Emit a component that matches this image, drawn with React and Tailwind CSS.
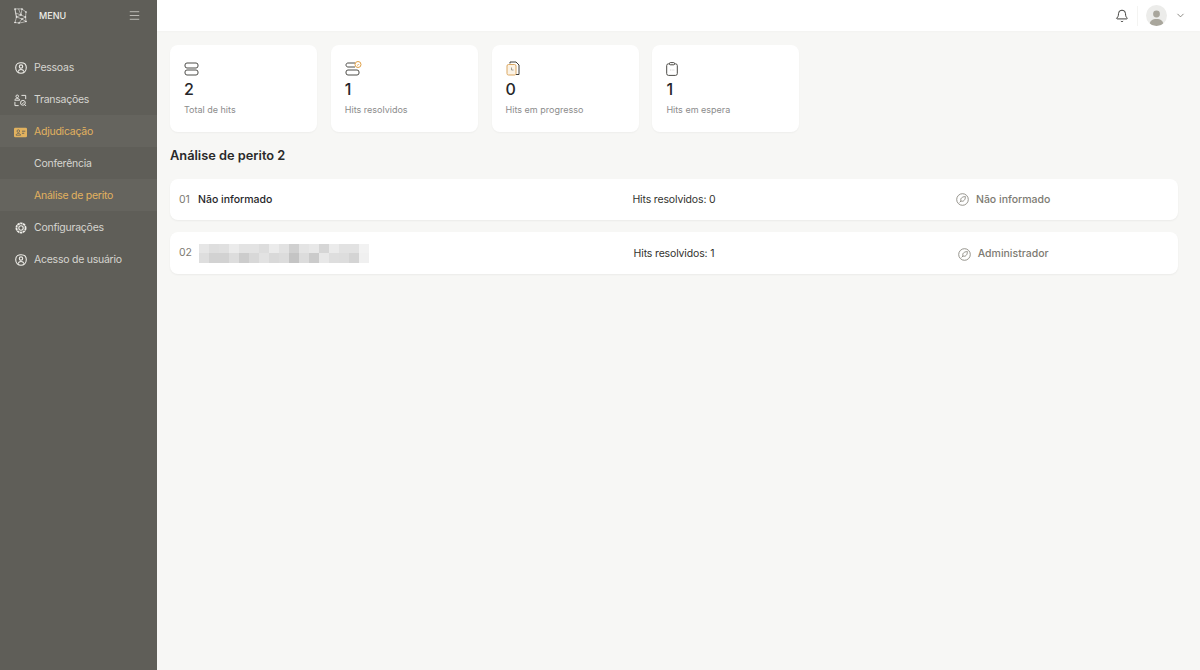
import React from "react";
import { Bell, ChevronDown, Menu } from "lucide-react";

const FONT = "font-['Inter','Noto_Sans',sans-serif]";

// pixelated name in row 02
const PIXELS = [
  ["#e6e6e6", "#dedede", "#e0e0e0", "#ebebeb", "#e3e3e3", "#e3e3e3", "#dddddd", "#ebebeb", "#e2e2e2", "#d0d0d0", "#e4e4e4", "#e8e8e8", "#d6d6d6", "#ebebeb", "#e2e2e2", "#e2e2e2", "#f2f2f2"],
  ["#dedede", "#d2d2d2", "#d2d2d2", "#dddddd", "#cccccc", "#d8d8d8", "#e2e2e2", "#d9d9d9", "#dcdcdc", "#c4c4c4", "#dcdcdc", "#cbcbcb", "#e8e8e8", "#dedede", "#dddddd", "#d4d4d4", "#f0f0f0"],
];

const LogoIcon = () => (
  <svg width="13" height="16" viewBox="0 0 13 16" fill="none" stroke="#e9e8e4" strokeWidth="0.6">
    <path d="M1 1 L4.5 .8 L8 1 L12 4 L11.5 9 L12 13.5 L8 14.5 L5 15 L1 14.5 L2.5 9 L1.5 5 Z" />
    <path d="M1.5 5 L7 7 L2.5 9 L8 11 L12 13.5 M8 1 L7 7 L11.5 9 L8 11 L5 15 M1 1 L2.5 9 M4.5 .8 L7 7" />
    <g fill="#f4f3f0" stroke="none">
      <circle cx="1" cy="1" r="0.8" />
      <circle cx="8" cy="1" r="0.8" />
      <circle cx="12" cy="4" r="0.8" />
      <circle cx="7" cy="7" r="0.8" />
      <circle cx="11.5" cy="9" r="0.8" />
      <circle cx="12" cy="13.5" r="0.8" />
      <circle cx="5" cy="15" r="0.8" />
      <circle cx="1" cy="14.5" r="0.8" />
      <circle cx="2.5" cy="9" r="0.8" />
      <circle cx="8" cy="11" r="0.8" />
    </g>
  </svg>
);

const PersonBadgeIcon = () => (
  <svg width="12" height="12" viewBox="0 0 12 12" fill="none" stroke="#efeee9" strokeWidth="1.1">
    <path d="M6 .7 C8.2 .7 11.3 1.8 11.3 5.6 C11.3 9.2 8.8 11.3 6 11.3 C3.2 11.3 .7 9.2 .7 5.6 C.7 1.8 3.8 .7 6 .7 Z" />
    <circle cx="6" cy="4.6" r="1.7" />
    <path d="M3 9.6 C3.6 8 4.7 7.5 6 7.5 C7.3 7.5 8.4 8 9 9.6" />
  </svg>
);

const TransactionIcon = () => (
  <svg width="14" height="13" viewBox="0 0 14 13" fill="none" stroke="#efeee9" strokeWidth="1">
    <circle cx="3.5" cy="2" r="1.4" />
    <path d="M.8 6.2 C1 4.8 2.2 4.4 3.5 4.4 C4.8 4.4 6 4.8 6.2 6.2 Z" />
    <path d="M8 1 H12.6 V5" />
    <path d="M1 8 V12 H5" />
    <circle cx="9.6" cy="9" r="2.6" />
    <path d="M8.6 9 L9.4 9.8 L10.8 8.4 M11.6 11 L13 12.4" />
  </svg>
);

const IdCardIcon = () => (
  <svg width="15" height="11" viewBox="0 0 15 11">
    <rect width="15" height="11" rx="1.5" fill="#e2b25f" />
    <circle cx="5" cy="3.9" r="1.5" fill="none" stroke="#5f5e58" strokeWidth="0.9" />
    <path d="M2.4 8.6 C2.7 7 3.8 6.6 5 6.6 C6.2 6.6 7.3 7 7.6 8.6 Z" fill="none" stroke="#5f5e58" strokeWidth="0.9" />
    <path d="M9.2 4 H13 M9.2 6.4 H11.8" stroke="#5f5e58" strokeWidth="1" />
  </svg>
);

const GearIcon = () => (
  <svg width="12" height="12" viewBox="0 0 12 12" fill="none" stroke="#efeee9" strokeWidth="1.1">
    <circle cx="6" cy="6" r="4.6" strokeDasharray="2.4 .5" strokeWidth="1.8" />
    <circle cx="6" cy="6" r="2.2" />
  </svg>
);

const StackIcon = () => (
  <svg width="15" height="14" viewBox="0 0 15 14" fill="none" stroke="#4d4c48" strokeWidth="1">
    <rect x="1" y="1" width="13" height="5" rx="2" />
    <rect x="1" y="8" width="13" height="5" rx="2" />
  </svg>
);

const StackCheckIcon = () => (
  <svg width="17" height="15" viewBox="0 0 17 15" fill="none" strokeWidth="1">
    <path d="M10 2 H3 C1.8 2 1 2.8 1 4 C1 5.2 1.8 6 3 6 H10" stroke="#4d4c48" />
    <rect x="1" y="9" width="13" height="5" rx="2" stroke="#4d4c48" />
    <circle cx="13" cy="3.5" r="3" stroke="#df9f45" />
    <path d="M11.9 3.5 L12.8 4.4 L14.2 3" stroke="#df9f45" strokeWidth="0.8" />
  </svg>
);

const ProgressIcon = () => (
  <svg width="14" height="15" viewBox="0 0 14 15" fill="none" strokeWidth="1">
    <path d="M4 2.5 V1 H10 L13 4 V13.5 H10" stroke="#3a3a37" />
    <rect x="1" y="3.5" width="9" height="10.5" rx="1.5" stroke="#dca862" fill="#fbf3e6" />
    <path d="M5.5 6.5 V9 H7.5" stroke="#8b8880" strokeWidth="0.8" />
  </svg>
);

const ClipboardIcon = () => (
  <svg width="12" height="14" viewBox="0 0 12 14" fill="none" stroke="#4d4c48" strokeWidth="1">
    <rect x=".7" y="1.8" width="10.6" height="11.6" rx="1.8" />
    <rect x="3.5" y=".6" width="5" height="2.2" rx=".8" fill="#fff" />
    <path d="M4 8 H4.6 M5.8 8 H6.4 M7.6 8 H8.2" stroke="#9a9891" strokeWidth="0.7" />
  </svg>
);

const CompassIcon = () => (
  <svg width="13" height="13" viewBox="0 0 13 13" fill="none" stroke="#8a8880" strokeWidth="0.9">
    <circle cx="6.5" cy="6.5" r="5.8" />
    <path d="M3.6 9.4 L5 8 M5 8 C4 5.6 6 3.6 9.4 3.6 C9.4 7 7.4 9 5 8 Z" />
  </svg>
);

const NavItem = ({ icon, label, active, parentActive }) => (
  <div className={`flex h-8 items-center gap-[7px] pl-[14px] pt-[2px] text-[10.5px] leading-4 tracking-[-0.25px] ${parentActive ? "bg-[#65645e]" : ""} ${active ? "text-[#e2b25f]" : "text-[#d6d5d0]"}`}>
    <span className="flex w-[13px] justify-center">{icon}</span>
    {label}
  </div>
);

const SubItem = ({ label, active }) => (
  <div className={`flex h-8 items-center pl-[34px] pt-[2px] text-[10.5px] leading-4 tracking-[-0.25px] ${active ? "bg-[#65645e] text-[#e2b25f]" : "text-[#d6d5d0]"}`}>
    {label}
  </div>
);

const StatCard = ({ icon, value, label }) => (
  <div className="flex h-[87px] w-[147px] flex-col rounded-lg bg-white pl-[14px] pt-4 shadow-[0_1px_2px_rgba(0,0,0,0.04)]">
    <div className="flex h-[15px] items-center">{icon}</div>
    <div className="mt-[3px] text-[16px] leading-5 font-medium text-[#26262a]">{value}</div>
    <div className="mt-[5px] text-[9px] leading-3 text-[#8c8c8c]">{label}</div>
  </div>
);

const HitRow = ({ index, name, resolved, owner }) => (
  <div className="grid grid-cols-3 items-center rounded-lg bg-white px-2 py-[11.5px] text-[10.5px] leading-4 shadow-[0_1px_2px_rgba(0,0,0,0.05)]">
    <div className="flex min-h-[18px] items-center gap-[8px]">
      <span className="w-[12px] pl-px text-[#7d7b72]">{index}</span>
      {name ? (
        <span className="font-medium text-[#26262a]">{name}</span>
      ) : (
        <div className="ml-px flex flex-col">
          {PIXELS.map((row, r) => (
            <div key={r} className="flex">
              {row.map((c, i) => (
                <div key={i} className="h-[9.5px] w-[10px]" style={{ backgroundColor: c }} />
              ))}
            </div>
          ))}
        </div>
      )}
    </div>
    <div className={`text-center tracking-[-0.15px] text-[#33332f] ${name ? "" : "pt-[2px]"}`}>Hits resolvidos: {resolved}</div>
    <div className={`flex items-center justify-center gap-[7px] pr-[3px] font-medium text-[#7d7b72] ${name ? "" : "pt-[2px]"}`}>
      <CompassIcon />
      {owner}
    </div>
  </div>
);

export default function App() {
  return (
    <div className={`flex h-[670px] w-[1200px] overflow-hidden bg-[#f7f7f5] ${FONT}`}>
      {/* Sidebar */}
      <aside className="w-[157px] shrink-0 bg-[#5f5e58]">
        <div className="flex h-[31px] items-center pl-[14px] pr-[16px]">
          <LogoIcon />
          <span className="ml-[12px] text-[9px] font-medium text-[#efeee9]">MENU</span>
          <Menu size={13} strokeWidth={1.5} className="ml-auto text-[#cfcec9]" />
        </div>
        <nav className="mt-[20px]">
          <NavItem icon={<PersonBadgeIcon />} label="Pessoas" />
          <NavItem icon={<TransactionIcon />} label="Transações" />
          <NavItem icon={<IdCardIcon />} label="Adjudicação" active parentActive />
          <SubItem label="Conferência" />
          <SubItem label="Análise de perito" active />
          <NavItem icon={<GearIcon />} label="Configurações" />
          <NavItem icon={<PersonBadgeIcon />} label="Acesso de usuário" />
        </nav>
      </aside>

      <div className="flex min-w-0 flex-1 flex-col">
        {/* Topbar */}
        <header className="flex h-[31px] items-center justify-end bg-white pr-[14px] shadow-[0_1px_2px_rgba(0,0,0,0.02)]">
          <Bell size={14} strokeWidth={1.6} className="text-[#33332f]" />
          <div className="ml-[8px] h-5 w-px bg-[#f4f4f2]" />
          <div className="ml-[8px] flex h-[21px] w-[21px] items-end justify-center overflow-hidden rounded-full bg-[#ececea]">
            <svg width="15" height="17" viewBox="0 0 15 17" fill="#a9a69c">
              <circle cx="7.5" cy="5" r="3.4" />
              <path d="M0.5 17 C0.5 11.5 3.5 10 7.5 10 C11.5 10 14.5 11.5 14.5 17 Z" />
            </svg>
          </div>
          <ChevronDown size={11} strokeWidth={1.7} className="ml-[8px] text-[#6d6b64]" />
        </header>

        {/* Content */}
        <main className="pl-[13px] pr-[22px] pt-[14px]">
          <div className="flex gap-[13.8px]">
            <StatCard icon={<StackIcon />} value="2" label="Total de hits" />
            <StatCard icon={<StackCheckIcon />} value="1" label="Hits resolvidos" />
            <StatCard icon={<ProgressIcon />} value="0" label="Hits em progresso" />
            <StatCard icon={<ClipboardIcon />} value="1" label="Hits em espera" />
          </div>
          <h2 className="mt-[15px] text-[12.8px] leading-[18px] font-semibold text-[#2a2a2a]">Análise de perito 2</h2>
          <div className="mt-[14px] flex flex-col gap-[12px]">
            <HitRow index="01" name="Não informado" resolved={0} owner="Não informado" />
            <HitRow index="02" resolved={1} owner="Administrador" />
          </div>
        </main>
      </div>
    </div>
  );
}
